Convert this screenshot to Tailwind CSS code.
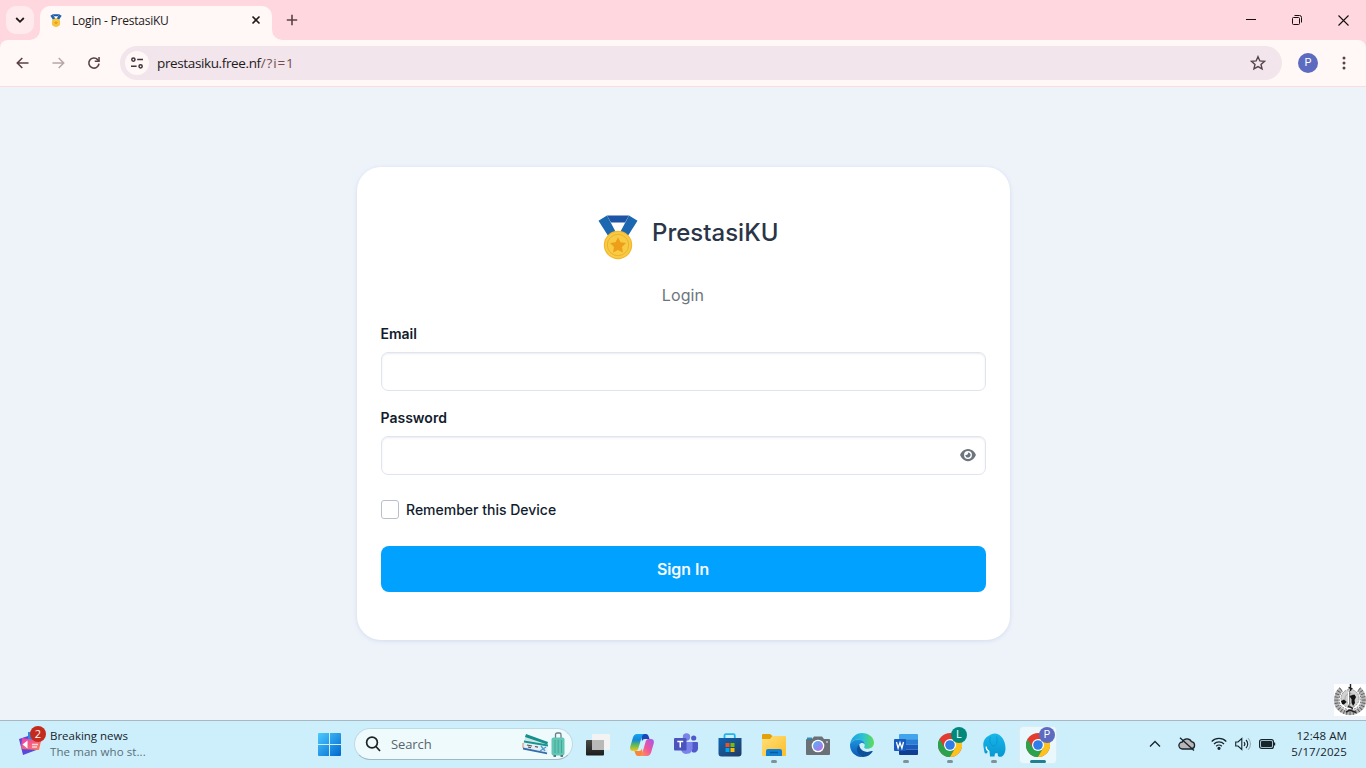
<!DOCTYPE html>
<html lang="en">
<head>
<meta charset="utf-8">
<title>Login - PrestasiKU</title>
<script src="https://cdn.jsdelivr.net/npm/@tailwindcss/browser@4"></script>
</head>
<body class="w-[1366px] h-[768px] overflow-hidden flex flex-col bg-[#eef3fa] font-['Open_Sans',sans-serif] whitespace-nowrap">
<svg class="absolute" width="0" height="0">
  <defs>
    <linearGradient id="win" x1="0" y1="0" x2="1" y2="1"><stop stop-color="#4ccaff"/><stop offset="1" stop-color="#0067cf"/></linearGradient>
    <linearGradient id="cpA" x1="0" y1="0" x2="0" y2="1"><stop stop-color="#12a5f4"/><stop offset=".35" stop-color="#1687d9"/><stop offset=".65" stop-color="#5dba5a"/><stop offset="1" stop-color="#f5c518"/></linearGradient>
    <linearGradient id="cpB" x1="1" y1="0" x2="0" y2="1"><stop stop-color="#a257ec"/><stop offset=".5" stop-color="#f0559b"/><stop offset="1" stop-color="#ffa14a"/></linearGradient>
    <linearGradient id="news" x1="0" y1="0" x2="1" y2="1"><stop stop-color="#e83fb4"/><stop offset="1" stop-color="#ff7d52"/></linearGradient>
    <linearGradient id="dk" x1="0" y1="0" x2="0" y2="1"><stop stop-color="#4a4a48"/><stop offset="1" stop-color="#1c1c1b"/></linearGradient>
    <linearGradient id="store" x1="0" y1="0" x2="1" y2="1"><stop stop-color="#0f66b5"/><stop offset="1" stop-color="#223a61"/></linearGradient>
    <linearGradient id="fold" x1="0" y1="0" x2="1" y2="1"><stop stop-color="#ffe07a"/><stop offset="1" stop-color="#fcbd2a"/></linearGradient>
    <linearGradient id="lens" x1="0" y1="0" x2="1" y2="1"><stop stop-color="#4ab8f5"/><stop offset="1" stop-color="#c069e8"/></linearGradient>
    <linearGradient id="edA" x1="0" y1="0" x2="1" y2="0"><stop stop-color="#1b9de2"/><stop offset=".55" stop-color="#2cc3d3"/><stop offset="1" stop-color="#62dc52"/></linearGradient>
    <linearGradient id="edB" x1="0" y1="0" x2="0" y2="1"><stop stop-color="#1c95dd"/><stop offset="1" stop-color="#0b58b5"/></linearGradient>
    <linearGradient id="ele" x1="0" y1="0" x2="0" y2="1"><stop stop-color="#18b7ec"/><stop offset="1" stop-color="#0797cf"/></linearGradient>
    <symbol id="medal" viewBox="0 0 40 45">
      <path d="M9 0.5H31L27 7.5H13Z" fill="#1c55a5"/>
      <path d="M9 0.5 0.5 5.8 10.5 21.5 18 17.5Z" fill="#1b67b0"/>
      <path d="M31 0.5 39.5 5.8 29.5 21.5 22 17.5Z" fill="#1b67b0"/>
      <circle cx="20" cy="30" r="14.2" fill="#f3b72e"/><circle cx="20" cy="30" r="13" fill="#f8cb45"/>
      <circle cx="20" cy="30" r="10.7" fill="none" stroke="#efb02c" stroke-width="1"/>
      <path d="m20 22.3 2.5 5 5.5.8-4 3.9.95 5.5L20 34.9l-4.95 2.6.95-5.5-4-3.9 5.5-.8Z" fill="#ee9f19"/>
    </symbol>
    <symbol id="chrome" viewBox="0 0 24 24">
      <circle cx="12" cy="12" r="12" fill="#e33b2e"/>
      <path d="M1.6 6A12 12 0 0 0 12 24L17.2 15 12 12 6.8 15Z" fill="#2ba24c"/>
      <path d="M12 24A12 12 0 0 0 22.4 6H12L17.2 15Z" fill="#fcc31e"/>
      <circle cx="12" cy="12" r="6" fill="#fff"/><circle cx="12" cy="12" r="4.8" fill="#2f7de9"/>
    </symbol>
  </defs>
</svg>

<!-- Tab strip -->
<header class="h-10 shrink-0 bg-[#ffd8df] flex">
  <div class="w-10 flex items-center pl-1.5">
    <div class="size-7 rounded-[10px] bg-[#ffebee] flex items-center justify-center"><svg width="10" height="8" viewBox="0 0 10 8" fill="none" stroke="#1f1a1b" stroke-width="1.8"><path d="M1.2 2 5 5.8 8.8 2"/></svg></div>
  </div>
  <div class="relative mt-1.5 h-[34px] w-[232px] rounded-t-[10px] bg-[#fff8f7] flex items-center pl-[10px] pb-1.5">
    <svg class="absolute bottom-0 -left-2.5" width="10" height="10"><path d="M10 0V10H0A10 10 0 0 0 10 0Z" fill="#fff8f7"/></svg>
    <svg class="absolute bottom-0 -right-2.5" width="10" height="10"><path d="M0 0V10H10A10 10 0 0 1 0 0Z" fill="#fff8f7"/></svg>
    <svg width="12" height="13"><use href="#medal"/></svg>
    <span class="ml-[10px] w-[179px] pt-px text-xs tracking-[-0.24px] text-[#231a1b]">Login - PrestasiKU</span>
    <svg width="10" height="10" viewBox="0 0 10 10" stroke="#231a1b" stroke-width="1.6"><path d="M1.5 1.5 8.5 8.5M8.5 1.5 1.5 8.5"/></svg>
  </div>
  <div class="w-10 flex items-center justify-center"><svg width="12" height="12" viewBox="0 0 12 12" stroke="#5a4145" stroke-width="1.6"><path d="M6 .8V11.2M.8 6H11.2"/></svg></div>
  <div class="ml-auto flex">
    <div class="w-[46px] flex items-center justify-center"><svg width="10" height="10"><path d="M0 4.5H10" stroke="#111"/></svg></div>
    <div class="w-[46px] flex items-center justify-center"><svg width="10" height="10" viewBox="0 0 10 10" fill="none" stroke="#111"><rect x=".5" y="2.5" width="7" height="7" rx="1"/><path d="M2.5 .5H7.5A2 2 0 0 1 9.5 2.5V7.5"/></svg></div>
    <div class="w-[46px] flex items-center justify-center"><svg width="11" height="11" viewBox="0 0 11 11" stroke="#111" stroke-width="1.1"><path d="M.5 .5 10.5 10.5M10.5 .5 .5 10.5"/></svg></div>
  </div>
</header>

<!-- Toolbar -->
<div class="h-[47px] shrink-0 bg-[#ffd8df]">
  <div class="h-[47px] rounded-t-[8px] bg-[#fff8f7] border-b border-[#fadbe0] flex items-center">
    <div class="ml-[15.500px] w-9"><svg width="13" height="12" viewBox="0 0 13 12" fill="none" stroke="#5a4145" stroke-width="1.6"><path d="M12.5 6H1.5M6.3 1 1.3 6l5 5"/></svg></div>
    <div class="w-[35.500px]"><svg width="13" height="12" viewBox="0 0 13 12" fill="none" stroke="#b8a6a8" stroke-width="1.5"><path d="M.5 6H11.5M6.7 1l5 5-5 5"/></svg></div>
    <div class="w-[33px]"><svg width="14" height="14" viewBox="0 0 14 14"><path d="M12 7.6A5.1 5.1 0 1 1 10.7 3.6L12 5" fill="none" stroke="#5a4145" stroke-width="1.6"/><path d="M12.8 1V6H7.8V4.5H11.3V1Z" fill="#5a4145"/></svg></div>
    <div class="h-[34px] w-[1162px] rounded-full bg-[#f2e5eb] flex items-center pl-[5px]">
      <div class="size-6 rounded-full bg-[#fff8f7] flex items-center justify-center"><svg width="12" height="12" viewBox="0 0 12 12" fill="none" stroke="#40343a" stroke-width="1.5"><circle cx="2.4" cy="2.6" r="1.6"/><path d="M6.2 2.6H12M0 9.3H5.6"/><circle cx="9.6" cy="9.3" r="1.6"/></svg></div>
      <span class="ml-2 w-[1093px] text-[13.5px] text-[#231a1b]"><span class="tracking-[-0.37px]">prestasiku.free.nf</span><span class="text-[#74504c] tracking-[0.85px]">/?i=1</span></span>
      <svg width="16" height="16" viewBox="0 0 24 24" fill="none" stroke="#54444a" stroke-width="2.1"><path d="m12 2.5 2.8 6.4 7 .6-5.3 4.6 1.6 6.8-6.1-3.6-6.1 3.6 1.6-6.8L2.2 9.5l7-.6Z"/></svg>
    </div>
    <div class="ml-4 size-5 rounded-full bg-[#5c6bc0] flex items-center justify-center text-white text-[11px] font-['Roboto',sans-serif]">P</div>
    <svg class="ml-6" width="4" height="14" fill="#5a4145"><circle cx="2" cy="2" r="1.5"/><circle cx="2" cy="7" r="1.5"/><circle cx="2" cy="12" r="1.5"/></svg>
  </div>
</div>

<!-- Page -->
<main class="relative flex-1 pt-20 font-['Inter',sans-serif]">
  <form class="ml-[357px] w-[653px] h-[473px] rounded-[24px] bg-white shadow-[0_1px_4px_rgba(120,140,190,0.22)] px-6 pt-12 flex flex-col">
    <div class="flex h-[45px] pl-[217px]">
      <svg width="40" height="45"><use href="#medal"/></svg>
      <h1 class="ml-[14px] h-[35px] leading-[35px] text-2xl font-medium text-[#2a3547]">PrestasiKU</h1>
    </div>
    <p class="mt-[23px] h-6 leading-6 pr-px text-center text-base tracking-[0.1px] text-[#6c757d]">Login</p>
    <label class="mt-[17px] -ml-[0.5px] h-5 leading-5 text-sm font-semibold text-[#111c2d]">Email</label>
    <div class="mt-2 h-[39px] rounded-[7px] border border-[#dfe5ef] shadow-[inset_0_1px_2px_rgba(0,0,0,0.075)]"></div>
    <label class="mt-[17px] -ml-[0.5px] h-5 leading-5 text-sm font-semibold text-[#111c2d]">Password</label>
    <div class="mt-2 h-[39px] rounded-[7px] border border-[#dfe5ef] shadow-[inset_0_1px_2px_rgba(0,0,0,0.075)] flex items-center justify-end pr-[9px] pb-[2px]">
      <svg width="16" height="14" viewBox="0 0 576 512" fill="#6c757d"><path d="M288 32c-80.800 0-145.500 36.800-192.600 80.600C48.600 156 17.300 208 2.500 243.700c-3.300 7.900-3.300 16.700 0 24.600C17.300 304 48.600 356 95.400 399.400C142.500 443.200 207.200 480 288 480s145.500-36.800 192.600-80.600c46.800-43.500 78.100-95.400 93-131.100c3.300-7.900 3.300-16.700 0-24.600c-14.900-35.700-46.200-87.700-93-131.100C433.500 68.800 368.800 32 288 32zM144 256a144 144 0 1 1 288 0 144 144 0 1 1 -288 0zm144-64c0 35.300-28.700 64-64 64c-7.100 0-13.900-1.200-20.300-3.300c-5.500-1.800-11.900 1.600-11.700 7.400c.3 6.900 1.300 13.800 3.200 20.700c13.700 51.200 66.400 81.600 117.600 67.900s81.600-66.400 67.900-117.600c-11.100-41.500-47.800-69.400-88.600-71.100c-5.800-.2-9.200 6.100-7.400 11.700c2.100 6.400 3.300 13.200 3.300 20.300z"/></svg>
    </div>
    <div class="mt-[25px] h-5 flex items-start">
      <div class="w-[18px] h-[19px] rounded-[3px] border border-[#b9c0cc]"></div>
      <span class="ml-[7px] leading-5 text-sm font-medium text-[#111c2d]">Remember this Device</span>
    </div>
    <div class="mt-[26px] h-[46px] rounded-[8px] bg-[#00a1ff] flex items-center justify-center pr-px text-base font-medium text-white [-webkit-text-stroke:0.2px_white]">Sign In</div>
  </form>
  <!-- Emblem floating over the page corner -->
  <svg class="absolute right-0 bottom-1" width="32" height="32" viewBox="0 0 32 32" fill="none">
    <path d="M0 0H32V32H0Z" fill="#fff"/>
    <path d="M7 5C2 9 1 18 4 23c3 4 7 6 12 6s9-2 12-6c3-5 2-14-3-18" stroke="#b4b4b4" stroke-width="4.500"/>
    <path d="M7 5C2 9 1 18 4 23c3 4 7 6 12 6s9-2 12-6c3-5 2-14-3-18" stroke="#555" stroke-width="4" stroke-dasharray=".8 2.200"/>
    <path d="M8.500 7C4.500 11 4 18 7 22c5 5 13 5 18 0 3-4 2.500-11-1.500-15" stroke="#777" stroke-dasharray="2 1"/>
    <circle cx="16" cy="14.500" r="9" fill="#d2d2d2"/>
    <circle cx="16" cy="14.500" r="9" stroke="#8a8a8a" stroke-dasharray="2 1"/>
    <circle cx="16" cy="14.500" r="5" stroke="#aaa"/>
    <path d="M7 17 10 15.500 12.500 18 10 20.500 8 20Z" fill="#111"/>
    <path d="M15 12 20.500 10.500 22 13 20.500 16 21 19 19 22 17.500 18.500 17.500 15Z" fill="#111"/>
    <path d="M16.500 0V7M14.500 3.500 18.500 5M14 22 19 24.500M12 28 16 26 22 28.500" stroke="#222" stroke-width="1.400"/>
    <path d="M14.500 8V20" stroke="#fff"/><path d="M15.700 7V24" stroke="#555" stroke-width=".8"/>
  </svg>
</main>

<!-- Taskbar -->
<footer class="h-12 shrink-0 bg-[#cdeffc] border-t border-[#a5b9c3] flex text-xs text-[#17242a]">
  <div class="w-[308px] flex pl-[18px]">
    <div class="relative w-[32px]">
      <svg class="mt-[9px]" width="24" height="26" viewBox="0 0 24 26"><path d="M1 9 16 4 21 19 5 25Z" fill="#5a48d8"/><path d="M10 2H22V14H10Z" fill="#2b8be8"/><path d="M4 8 23 11 21 20 3 19Z" fill="url(#news)"/><path d="m4.500 14.500 5-4v8Z" fill="#fff"/><path d="M14 14.500H20M14 17H19" stroke="#ffd5dc" stroke-width="1.300"/></svg>
      <span class="absolute left-3 top-[5px] size-4 rounded-full bg-[#c42b1c] text-white text-[11px] leading-4 text-center">2</span>
    </div>
    <div class="pt-[7px] leading-4 text-[11.500px]"><div class="tracking-[-0.02px]">Breaking news</div><div class="tracking-[0.08px] text-[#5a6e77]">The man who st...</div></div>
  </div>
  <div class="w-[43px] flex items-center justify-center"><svg width="23" height="23" viewBox="0 0 23 23" fill="url(#win)"><path d="M1 0H11V11H0V1A1 1 0 0 1 1 0ZM12 0H22A1 1 0 0 1 23 1V11H12ZM0 12H11V23H1A1 1 0 0 1 0 22ZM12 12H23V22A1 1 0 0 1 22 23H12Z"/></svg></div>
  <div class="ml-[3px] mt-[7px] h-8 w-[219px] rounded-full bg-[#effafd] border border-[#bddbe5] border-b-[#9fb9c3] flex items-center pl-[10px]">
    <svg width="16" height="16" viewBox="0 0 16 16" fill="none" stroke="#1c2326" stroke-width="1.700"><circle cx="7" cy="6.500" r="5.400"/><path d="m11 10.500 4 4.500"/></svg>
    <span class="ml-[10px] w-[131px] pt-px text-[13px] tracking-[-0.1px] text-[#59656a]">Search</span>
    <svg width="44" height="25" viewBox="0 0 44 25">
      <path d="m4 3 21 7-3 9L1 12Z" fill="#cfe5e8"/><path d="m4 2 22 8-.8 2.500L3 5Z" fill="#15908c"/>
      <path d="m2 10 23 3 1 9L1 16Z" fill="#e4eff5"/><path d="m2 8.500 24 4v2L2 10.500Z" fill="#16958f"/><path d="m1 15.500 24 5v1.800L1 17.500Z" fill="#356da9"/><path d="m5 13 5 1M6 15l3 .7M13 14.500l3 .6" stroke="#555" stroke-width="1.200"/><path d="m19 14 4 5M24 15l-6 4" stroke="#4c9bcf" stroke-width="1.300"/><path d="M1 11v5" stroke="#c98a6a"/>
      <path d="M33.500 6V2.500A1.500 1.500 0 0 1 35 1H37.500A1.500 1.500 0 0 1 39 2.500V6" fill="none" stroke="#687d8a" stroke-width="1.300"/><rect x="29.500" y="5.500" width="13" height="18" rx="2" fill="#62c6b5"/><path d="M33 8V21M36.200 8V21M39.500 8V21" stroke="#45a799" stroke-width="1"/><path d="M31.500 24H34M38.500 24H41" stroke="#35525a" stroke-width="1.500"/>
    </svg>
  </div>
  <div class="ml-[3px] flex">
    <div class="w-11 flex items-center justify-center"><svg class="-ml-px" width="24" height="24" viewBox="0 0 24 24"><rect y="7" width="18" height="15.500" rx="1" fill="url(#dk)"/><rect x="6" y="1" width="18" height="16" rx="1" fill="#f3f3f3"/><path d="M6 7H18V17H6Z" fill="#b9b9b9"/></svg></div>
    <div class="w-11 flex items-center justify-center"><svg width="24" height="22" viewBox="0 0 24 22"><path d="M11 0h5c1.500 0 2.200 1 2.700 2.500L19.500 5H15c-2 0-2.500 1-3 2.500Z" fill="#1847b8"/><path d="M7 0h8c-2 0-2.700 1.300-3.300 3.200L8.300 14.500C7.900 16 7 17 5.500 17H3C.6 17-.3 15 .3 12.500L2.800 4C3.500 1.500 5 0 7 0Z" fill="url(#cpA)"/><path d="M13 22H8c-1.500 0-2.200-1-2.700-2.500L4.500 17H9c2 0 2.500-1 3-2.500Z" fill="#f7873c"/><path d="M17 22H9c2 0 2.700-1.300 3.300-3.200L15.700 7.500C16.100 6 17 5 18.500 5H21c2.400 0 3.300 2 2.700 4.500L21.200 18c-.7 2.500-2.200 4-4.200 4Z" fill="url(#cpB)"/></svg></div>
    <div class="w-11 flex items-center justify-center"><svg width="24" height="23" viewBox="0 0 24 23"><circle cx="19.700" cy="5" r="2.600" fill="#5059c9"/><path d="M16 9h7a1 1 0 0 1 1 1v6a4 4 0 0 1-6 3Z" fill="#5059c9"/><circle cx="12.500" cy="4" r="3.700" fill="#7b83eb"/><path d="M7 9H18.500V16A6 6 0 0 1 7 17Z" fill="#7b83eb"/><rect y="5" width="12.500" height="12.500" rx="1" fill="#4b53bc"/><path d="M3.300 8.500H9.200M6.250 8.500V14.500" stroke="#fff" stroke-width="1.500"/></svg></div>
    <div class="w-11 flex items-center justify-center"><svg width="24" height="24" viewBox="0 0 24 24"><path d="M6.500 6V2.500A1.300 1.300 0 0 1 7.800 1.200H15.500A1.300 1.300 0 0 1 16.800 2.500V6" fill="none" stroke="#20b6ee" stroke-width="1.800"/><path d="M.5 5H23.500V20.500A3 3 0 0 1 20.500 23.500H3.500A3 3 0 0 1 .5 20.500Z" fill="url(#store)"/><path d="M7.500 10H11.500V14H7.500Z" fill="#f25022"/><path d="M12.500 10H16.500V14H12.500Z" fill="#7fba00"/><path d="M7.500 15H11.500V19H7.500Z" fill="#00a4ef"/><path d="M12.500 15H16.500V19H12.500Z" fill="#ffb900"/></svg></div>
    <div class="relative w-11 flex items-center justify-center"><svg width="24" height="22" viewBox="0 0 24 22"><path d="M0 1A1 1 0 0 1 1 0H8L10.500 2V5H0Z" fill="#e3a008"/><path d="M0 5H8L10.500 2H23A1 1 0 0 1 24 3V21A1 1 0 0 1 23 22H1A1 1 0 0 1 0 21Z" fill="url(#fold)"/><path d="M4 22V17A2 2 0 0 1 6 15H18A2 2 0 0 1 20 17V22Z" fill="#1280d2"/><path d="M8 18.500H16" stroke="#0b58a0" stroke-width="1.500"/></svg><i class="absolute left-[19px] bottom-[5px] w-1.5 h-[3px] rounded-full bg-[#7d9299]"></i></div>
    <div class="w-11 flex items-center justify-center"><svg class="mt-0.5" width="24" height="20" viewBox="0 0 24 20"><path d="M1 3V1.500H6V3Z" fill="#1299d6"/><path d="M0 4A1 1 0 0 1 1 3H6L8 .5H16L18 3H23A1 1 0 0 1 24 4V18A1 1 0 0 1 23 19H1A1 1 0 0 1 0 18Z" fill="#6a7075"/><circle cx="12" cy="10" r="6.300" fill="#fff"/><circle cx="12" cy="10" r="5" fill="url(#lens)"/><circle cx="21" cy="6" r="1" fill="#c4c8ca"/></svg></div>
    <div class="w-11 flex items-center justify-center"><svg width="24" height="24" viewBox="0 0 24 24"><path d="M.1 11C1 4.800 6 0 12 0c7 0 12 4.500 12 9.800 0 3.700-3 6-6.500 6-2.500 0-3.700-.8-3.300-1.600C16 10.500 13.500 6.500 8.800 6.500 4.500 6.500 1.300 8.500.1 11Z" fill="url(#edA)"/><path d="M.1 11C1.300 8.500 4.500 6.500 8.800 6.500c3.700 0 6 2.500 6 5.200-.6-1.200-1.500-1.800-2.800-1.800-1 0-2 .6-2.700 1.300-3 3-2.300 9 3.200 12.800C5.500 24.300 0 19 0 12Z" fill="url(#edB)"/><path d="M9.300 11.200c-4 3.300-3 10.300 3.200 12.800 4.500.1 8-2 10-5.200.4-.7-.2-1-.8-.7-6 2.400-12.500-.6-12.400-6.900Z" fill="#0c4f9b"/></svg></div>
    <div class="relative w-11 flex items-center justify-center"><svg width="24" height="21" viewBox="0 0 24 21"><path d="M6 0H23A1 1 0 0 1 24 1V5.500H5V1A1 1 0 0 1 6 0Z" fill="#41a5ee"/><path d="M5 5.300H24V10.500H5Z" fill="#2b7cd3"/><path d="M5 10.500H24V15.700H5Z" fill="#185abd"/><path d="M5 15.700H24V20A1 1 0 0 1 23 21H6A1 1 0 0 1 5 20Z" fill="#103f91"/><rect y="5" width="12" height="12" rx="1" fill="#185abd"/><path d="m2.500 8 1.600 6.200L6 8.500l1.900 5.700L9.500 8" fill="none" stroke="#fff" stroke-width="1.300"/></svg><i class="absolute left-[19px] bottom-[5px] w-1.5 h-[3px] rounded-full bg-[#7d9299]"></i></div>
    <div class="relative w-11 flex items-center justify-center"><svg width="24" height="24"><use href="#chrome"/></svg><span class="absolute left-[23px] top-[6px] size-4 rounded-full bg-[#00897b] text-white text-[10px] leading-4 text-center font-['Roboto',sans-serif]">L</span><i class="absolute left-[19px] bottom-[5px] w-1.5 h-[3px] rounded-full bg-[#7d9299]"></i></div>
    <div class="relative w-11 flex items-center justify-center"><svg width="23" height="24" viewBox="0 0 23 24"><path d="M.5 14C-.5 9 2 4.500 5.500 3 9-.5 15-.3 17.500 3c3 2.500 5 7 5 12.500 0 3-1 6.500-3.500 8-1.500.6-3 .4-4-.5L14.500 20l-2.500.5-.5 3H7L6.500 18 5 17c-.3 2-.5 3-1.500 3.500-1.500 0-2-.5-2.200-2Z" fill="url(#ele)"/><path d="M7.500 4C6 8 7.500 13 11 13c3.500-1 3.500-6 2.500-9.500" fill="none" stroke="#0a93c9" stroke-width=".8"/><path d="M3.200 13.500c0 2.500.8 4 2.500 4.500" fill="none" stroke="#fff" stroke-width="1.300"/></svg><i class="absolute left-[19px] bottom-[5px] w-1.5 h-[3px] rounded-full bg-[#7d9299]"></i></div>
    <div class="relative w-11 flex items-center justify-center"><div class="mx-auto size-[38px] shrink-0 rounded bg-[#e9f8fd] border border-[#dbecf2] flex items-center justify-center"><svg width="24" height="24"><use href="#chrome"/></svg></div><span class="absolute left-[23px] top-[6px] size-4 rounded-full bg-[#5c6bc0] text-white text-[10px] leading-4 text-center font-['Roboto',sans-serif]">P</span><i class="absolute left-[14px] bottom-[5px] w-4 h-[3px] rounded-full bg-[#1f8093]"></i></div>
  </div>
  <div class="ml-auto flex items-center pr-[19px] pb-0.5">
    <svg width="12" height="8" viewBox="0 0 12 8" fill="none" stroke="#17242a" stroke-width="1.300"><path d="m1 6.500 5-5 5 5"/></svg>
    <svg class="ml-[17px]" width="18" height="14" viewBox="0 0 18 14" fill="#b9b5b9" stroke="#17242a" stroke-width="1.300"><path d="M4.500 12A3.500 3.500 0 0 1 4.300 5 5 5 0 0 1 13.500 4.700 3.700 3.700 0 0 1 13.500 12Z"/><path d="M2 .7 16 13.500"/></svg>
    <svg class="ml-[15px]" width="16" height="13" viewBox="0 0 16 13" fill="none" stroke="#17242a" stroke-width="1.200"><path d="M.7 4.500a10.300 10.300 0 0 1 14.600 0M3 7a7 7 0 0 1 10 0M5.200 9.200a4 4 0 0 1 5.600 0"/><circle cx="8" cy="11.300" r="1" fill="#17242a"/></svg>
    <svg class="ml-2" width="16" height="14" viewBox="0 0 16 14" fill="none" stroke="#17242a" stroke-width="1.100"><path d="M.7 5H3L6.800 1.500V12.500L3 9H.7ZM9 5a3 3 0 0 1 0 4M11 3a5.500 5.500 0 0 1 0 8"/><path d="M13 1.200a8 8 0 0 1 0 11.600" stroke="#9ab0b9"/></svg>
    <svg class="ml-2" width="17" height="10" viewBox="0 0 17 10"><rect x=".6" y=".6" width="13.800" height="8.800" rx="2" fill="none" stroke="#17242a" stroke-width="1.200"/><rect x="2" y="2" width="11" height="6" rx=".8" fill="#17242a"/><path d="M15.500 3.500V6.500" stroke="#17242a" stroke-width="1.400"/></svg>
    <div class="ml-[15px] text-right leading-4 text-[11.500px]"><div class="tracking-[0.08px]">12:48 AM</div><div class="tracking-[0.13px]">5/17/2025</div></div>
  </div>
</footer>
</body>
</html>
